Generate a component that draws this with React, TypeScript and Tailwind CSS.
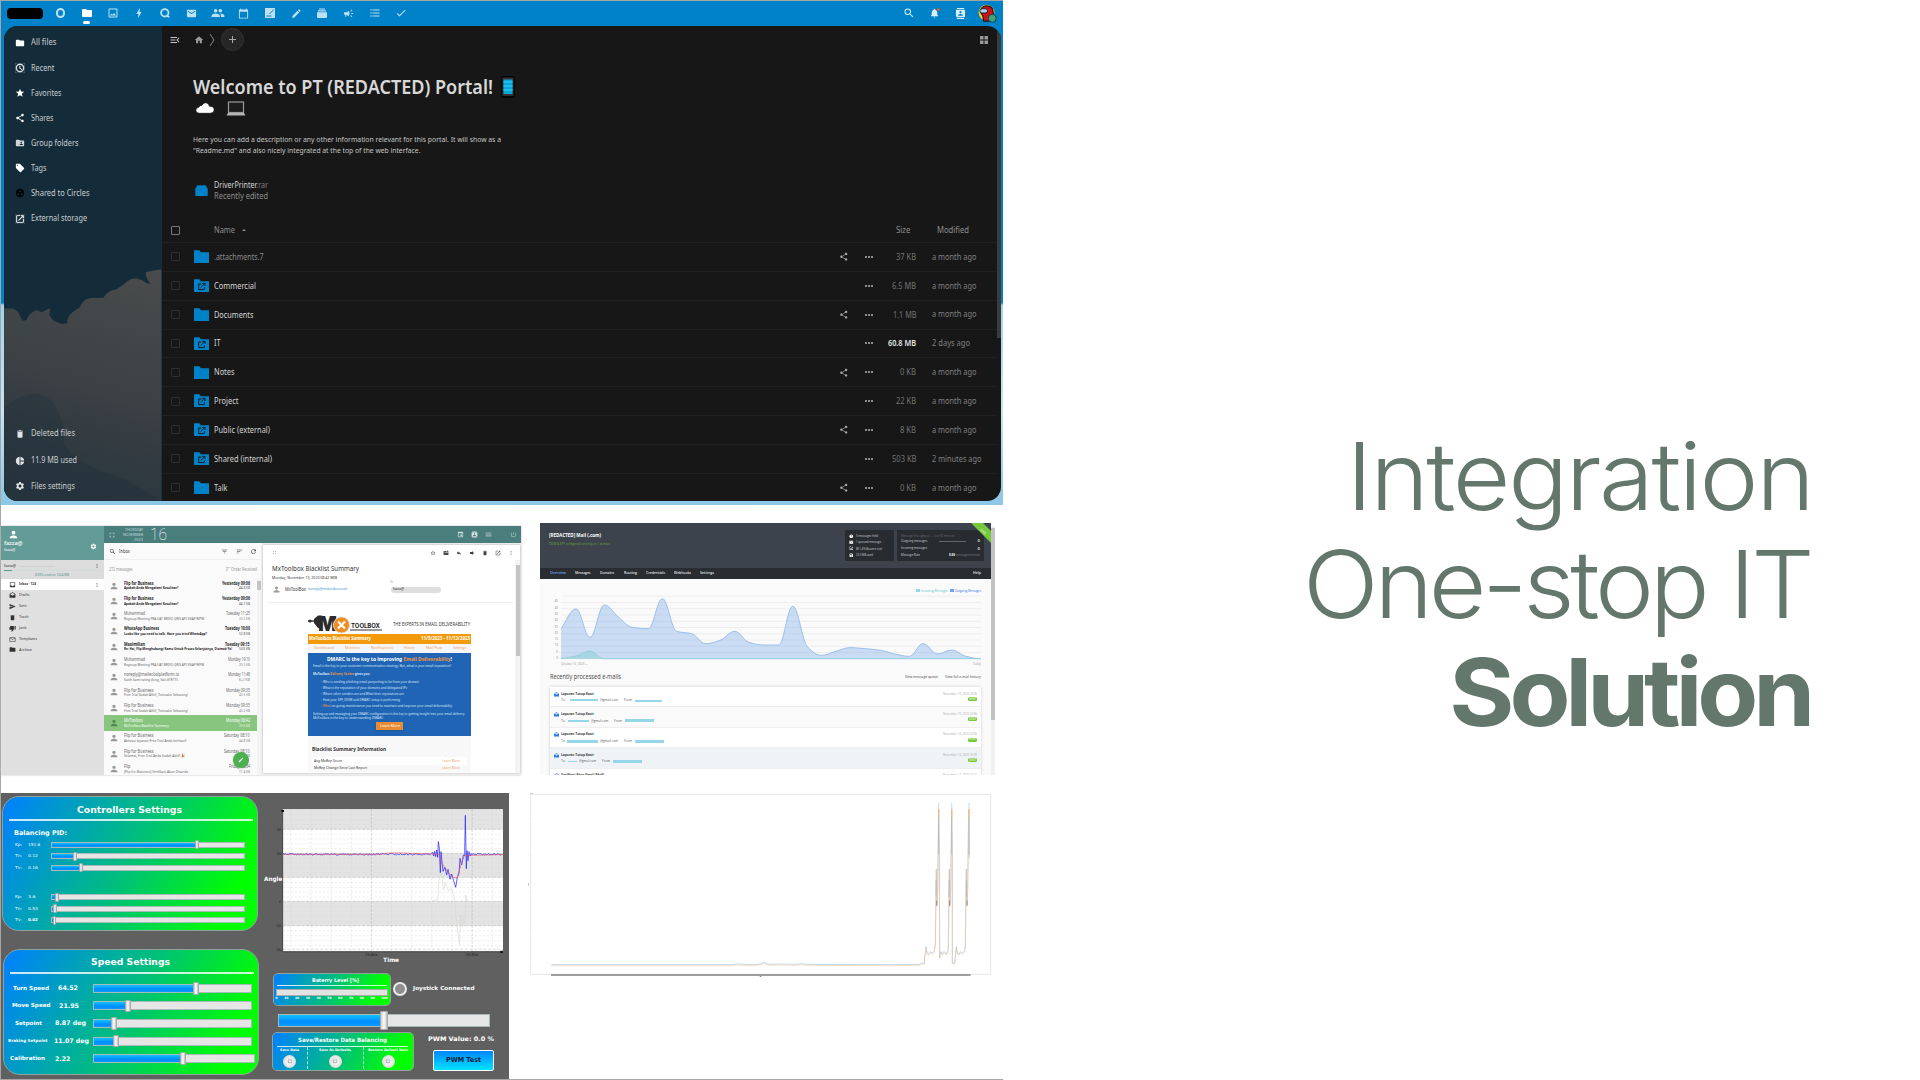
import React, { useLayoutEffect, useRef } from "react";
import {
  MdFolder, MdAccessTime, MdStar, MdShare, MdFolderShared, MdLocalOffer, MdGroupWork, MdOpenInNew,
  MdDelete, MdPieChart, MdSettings, MdOutlineImage, MdBolt, MdEmail, MdGroup, MdCalendarToday, MdEdit,
  MdCheck, MdFormatListBulleted, MdSearch, MdNotifications, MdContacts, MdHome, MdMenuOpen,
  MdCampaign, MdPerson, MdFilterList, MdSort, MdRefresh, MdMoreVert, MdInbox, MdDrafts, MdSend,
  MdThumbDown, MdMailOutline, MdEvent, MdStarBorder, MdReply, MdForward, MdMarkEmailUnread,
  MdPowerSettingsNew, MdFullscreen, MdMoreHoriz, MdHelp, MdMail, MdSave, MdAddchart,
} from "react-icons/md";

type Kids = { children: React.ReactNode };

/* Text squeezed or stretched horizontally to a fixed width. */
function Fit({ w, className = "", children }: { w: number; className?: string } & Kids) {
  const ref = useRef<HTMLSpanElement>(null);
  useLayoutEffect(() => {
    const n = ref.current;
    if (!n) return;
    n.style.transform = "none";
    n.style.transform = `scaleX(${w / n.getBoundingClientRect().width})`;
  }, [w]);
  return (
    <span className={"inline-block shrink-0 leading-none " + className} style={{ width: w }}>
      <span ref={ref} className="inline-block origin-left whitespace-nowrap">{children}</span>
    </span>
  );
}

/* Text tracked in or out to a fixed width. */
function Tracked({ w, className = "", children }: { w: number; className?: string; children: string }) {
  const ref = useRef<HTMLSpanElement>(null);
  useLayoutEffect(() => {
    const n = ref.current;
    if (!n) return;
    n.style.letterSpacing = "0px";
    const base = n.offsetWidth;
    n.style.letterSpacing = `${(w - base) / (children.length - 1)}px`;
  }, [w, children]);
  return (
    <span className={"block origin-right scale-x-[1.06] whitespace-nowrap " + className} style={{ width: w }}>
      <span ref={ref} className="inline-block">{children}</span>
    </span>
  );
}

/* ---------------------------------------------------------------- files */

const TOP_ICONS = [
  <span className="h-[9.500px] w-[9.500px] rounded-full border-[2px] border-[#bfe0f2]" />,
  <MdFolder className="h-[12px] w-[12px] text-white" />,
  <MdOutlineImage className="h-[12px] w-[12px]" />,
  <MdBolt className="h-[12px] w-[12px]" />,
  <svg viewBox="0 0 10 10" className="h-[10px] w-[10px]" fill="none" stroke="currentColor" strokeWidth="1.8"><circle cx="4.8" cy="4.8" r="3.7" /><path d="M6.5 7.6L9.3 9" /></svg>,
  <MdEmail className="h-[11px] w-[11px]" />,
  <MdGroup className="h-[14px] w-[14px]" />,
  <MdCalendarToday className="h-[11px] w-[11px]" />,
  <svg viewBox="0 0 10 10" className="h-[10px] w-[10px]"><path d="M0 0H10V10H0z" fill="currentColor" /><path d="M4.500 6L8.800 1.500M1.500 8h5" stroke="#0082c9" strokeWidth="1" /></svg>,
  <MdEdit className="h-[11px] w-[11px]" />,
  <svg viewBox="0 0 10 10" className="h-[10px] w-[10px]" fill="currentColor"><path d="M2 .5h6v1H2zM1 2.2h8v1.3H1zM0 4.3h10V9q0 1-1 1H1Q0 10 0 9z" /></svg>,
  <MdCampaign className="h-[11px] w-[11px]" />,
  <MdFormatListBulleted className="h-[12px] w-[12px]" />,
  <MdCheck className="h-[12px] w-[12px]" />,
];

const NAV: [React.ReactNode, string, number][] = [
  [<MdFolder />, "All files", 25.5],
  [<MdAccessTime strokeWidth={0.6} stroke="currentColor" />, "Recent", 23.5],
  [<MdStar />, "Favorites", 30.5],
  [<MdShare />, "Shares", 22.5],
  [<MdFolderShared className="text-[#d0d4d6]" />, "Group folders", 47.5],
  [<MdLocalOffer />, "Tags", 15.5],
  [<MdGroupWork className="text-black" />, "Shared to Circles", 58.5],
  [<MdOpenInNew strokeWidth={0.4} stroke="currentColor" />, "External storage", 56],
];

const NAV_FOOT: [React.ReactNode, string, number, string][] = [
  [<MdDelete />, "Deleted files", 44, "h-[28px]"],
  [<MdPieChart />, "11.9 MB used", 46, "h-[26px]"],
  [<MdSettings />, "Files settings", 44, "h-[25px]"],
];

type FileRow = { name: string; w: number; ext?: boolean; share?: boolean; size: string; sw: number; mod: string; mw: number; dim?: boolean; strong?: boolean };
const FILES: FileRow[] = [
  { name: ".attachments.7", w: 49.5, share: true, size: "37 KB", sw: 20, mod: "a month ago", mw: 44.5, dim: true },
  { name: "Commercial", w: 42, ext: true, size: "6.5 MB", sw: 24, mod: "a month ago", mw: 44.5 },
  { name: "Documents", w: 39.5, share: true, size: "1.1 MB", sw: 23.5, mod: "a month ago", mw: 44.5 },
  { name: "IT", w: 6.5, ext: true, size: "60.8 MB", sw: 28, mod: "2 days ago", mw: 38, strong: true },
  { name: "Notes", w: 20.5, share: true, size: "0 KB", sw: 16, mod: "a month ago", mw: 44.5 },
  { name: "Project", w: 24.5, ext: true, size: "22 KB", sw: 20, mod: "a month ago", mw: 44.5 },
  { name: "Public (external)", w: 56, ext: true, share: true, size: "8 KB", sw: 16, mod: "a month ago", mw: 44.5 },
  { name: "Shared (internal)", w: 58, ext: true, size: "503 KB", sw: 24.5, mod: "2 minutes ago", mw: 49.5 },
  { name: "Talk", w: 13.5, share: true, size: "0 KB", sw: 16, mod: "a month ago", mw: 44.5 },
];

function FolderIcon({ ext }: { ext?: boolean }) {
  return (
    <svg viewBox="0 0 46 40" className="h-[13.3px] w-[15.3px] shrink-0">
      <path d="M0 1h16l5 6h25v32H0z" fill="#0082c9" />
      {ext && <path d="M22 15h-8v17h17v-7M25 13h8v8M32 14L21 25" fill="none" stroke="#121a20" strokeWidth="3" />}
    </svg>
  );
}

function FilesApp() {
  return (
    <section className="flex h-[504px] w-[1002px] flex-col bg-[linear-gradient(#0082c9_0_302px,#9fd3f0_304px,#c4e3f3_410px,#8cc6e6_504px)] font-['Noto_Sans',sans-serif]">
      <header className="flex h-[25px] shrink-0 items-center bg-[#0082c9] text-[#bfe0f2]">
        <div className="mb-px ml-[6px] h-[11px] w-[36px] rounded-[4px] bg-black" />
        <div className="mb-px ml-[4.500px] flex">
          {TOP_ICONS.map((icon, i) => (
            <div key={i} className="relative flex h-[24px] w-[26.2px] items-center justify-center">
              {icon}
              {i === 1 && <span className="absolute bottom-[1px] h-[3px] w-[7px] rounded-full bg-white" />}
            </div>
          ))}
        </div>
        <div className="mr-[6px] mb-px ml-auto flex items-center text-[#d9eef9]">
          <MdSearch className="mr-[14.500px] h-[12px] w-[12px]" />
          <span className="relative mr-[15px]"><MdNotifications className="h-[12px] w-[11px]" /><i className="absolute top-[1px] right-0 h-[3px] w-[3px] rounded-full bg-[#e9522f]" /></span>
          <MdContacts className="mr-[12px] h-[11px] w-[11px]" />
          <svg viewBox="0 0 20 20" className="h-[19px] w-[19px]">
            <circle cx="9" cy="9" r="8.3" fill="#f3d21c" />
            <path d="M3 8Q3 2 9 2q7 0 7 7v4l-4 5H6l-1-6Q3 11 3 8z" fill="#d01018" stroke="#221015" strokeWidth="1.2" />
            <rect x="2" y="5" width="8" height="4.5" rx="2.2" fill="#a9d3e8" stroke="#16202a" />
            <circle cx="15" cy="15" r="4.2" fill="#41a674" stroke="#17394d" />
          </svg>
        </div>
      </header>

      <div className="ml-[3px] flex h-[475px] w-[997px] overflow-hidden rounded-[14px] bg-[#171717]">
        <aside className="relative flex w-[157.5px] shrink-0 flex-col bg-[#142b39] text-[8.3px] text-[#c9ced1]">
          <svg viewBox="12 18 472 735" className="absolute bottom-0 left-0 h-[245px] w-[157.5px]">
            <defs>
              <linearGradient id="cl" x1="0.6" y1="0" x2="0.4" y2="1">
                <stop offset="0" stopColor="#484a4b" /><stop offset="0.45" stopColor="#3d4245" /><stop offset="1" stopColor="#27343d" />
              </linearGradient>
            </defs>
            <path d="M12 175L40 176Q55 182 58 195L68 212 80 210Q85 190 110 180L125 187 150 174 148 195 160 212 185 222 202 220Q198 205 215 188L240 172Q246 150 270 144L310 143Q322 122 350 118L375 100Q390 84 412 86L425 90 440 100 452 101Q436 85 437 66L484 58V753H12Z" fill="url(#cl)" />
            <path d="M12 470Q110 400 160 460 200 520 190 580 230 650 380 690L480 753H12Z" fill="#24323c" opacity=".5" />
          </svg>
          <nav className="relative pt-[4px]">
            {NAV.map(([icon, label, w]) => (
              <a key={label} className="flex h-[25.15px] items-center">
                <span className="ml-[11px] flex w-[16px] text-[10px] text-white">{icon}</span>
                <Fit w={w}>{label}</Fit>
              </a>
            ))}
          </nav>
          <nav className="relative mt-auto pb-[2.5px]">
            {NAV_FOOT.map(([icon, label, w, h]) => (
              <a key={label} className={"flex items-center " + h}>
                <span className="ml-[11px] flex w-[16px] text-[10px] text-[#e1e4e6]">{icon}</span>
                <Fit w={w}>{label}</Fit>
              </a>
            ))}
          </nav>
        </aside>

        <main className="flex w-[835px] shrink-0 flex-col text-[#d4d4d4]">
          <div className="flex h-[27px] shrink-0 items-center text-[#9b9b9b]">
            <MdMenuOpen className="ml-[7.500px] h-[12px] w-[12px] text-[#c4c4c4]" />
            <MdHome className="ml-[13px] h-[10px] w-[10px]" />
            <svg viewBox="0 0 6 14" className="ml-[5px] h-[14px] w-[6px]" fill="none" stroke="#8a8a8a"><path d="M1 1l4 6-4 6" /></svg>
            <span className="ml-[6px] flex h-[23px] w-[23px] items-center justify-center rounded-full border border-[#333] bg-[#262626]">
              <svg viewBox="0 0 7 7" className="h-[7px] w-[7px]" stroke="#a8a8a8"><path d="M3.5 0v7M0 3.5h7" /></svg>
            </span>
            <svg viewBox="0 0 8 8" className="mr-[9px] ml-auto h-[8px] w-[8px]" fill="#9a9a9a"><path d="M0 0h3.500v3.500H0zM4.500 0H8v3.500H4.500zM0 4.500h3.500V8H0zM4.500 4.500H8V8H4.500z" /></svg>
          </div>
          <div className="mt-[22px] flex h-[24px] shrink-0 items-center pl-[31.5px]">
            <Fit w={300} className="text-[19.5px] font-semibold text-[#d8d8d8]">Welcome to PT (REDACTED) Portal!</Fit>
            <svg viewBox="0 0 14 22" className="ml-[8px] h-[22px] w-[14px]">
              <rect width="14" height="22" rx="2" fill="#050505" /><rect x="1.5" y="1.5" width="11" height="18.5" fill="#333" />
              <rect x="2.5" y="3.5" width="9" height="14.5" fill="#0aa5d6" /><path d="M2.5 6h9M2.5 10h9M2.5 14h9" stroke="#20c8f5" strokeWidth="1.4" />
            </svg>
          </div>
          <div className="flex h-[18px] shrink-0 items-center pl-[33.500px]">
            <svg viewBox="0 0 20 12" className="h-[12px] w-[20px]"><path d="M4.5 11.3Q.8 11.3.8 8.3q0-2.6 3-3Q4.600 3 7 3.300 8 .7 10.600.7 14 .8 14.500 4.300q4.500-.3 4.700 3.500 0 3.500-4 3.500z" fill="#fff" stroke="#050505" strokeWidth=".7" /></svg>
            <svg viewBox="0 0 20 15" className="ml-[10.500px] h-[15px] w-[20px]"><rect x="2.500" y="1" width="15" height="10.500" fill="#1c1c1c" stroke="#9c9c9c" strokeWidth="1.200" /><path d="M2 12h16l1.500 2.500H.5z" fill="#b4b4b4" /></svg>
          </div>
          <div className="mt-[17.5px] flex h-[22px] shrink-0 flex-col justify-around pl-[31.500px] text-[6.700px] text-[#c6c6c6]">
            <Fit w={308}>Here you can add a description or any other information relevant for this portal. It will show as a</Fit>
            <Fit w={227.500}>"Readme.md" and also nicely integrated at the top of the web interface.</Fit>
          </div>
          <div className="mt-[22.500px] mb-[.5px] flex h-[23px] shrink-0 items-center pl-[33px] text-[8.200px]">
            <svg viewBox="0 0 13 12" className="h-[11.500px] w-[13px]"><path d="M1.500 1q0-1 1-1h8q1 0 1 1v1.500h-10z" fill="#005e93" /><path d="M0 4l2-3h9l2 3v6.500q0 1-1 1H1q-1 0-1-1z" fill="#0082c9" /></svg>
            <div className="ml-[6.500px] flex flex-col gap-[2.500px]">
              <Fit w={54}>DriverPrinter<span className="text-[#7d7d7d]">.rar</span></Fit>
              <Fit w={54} className="text-[#8c8c8c]">Recently edited</Fit>
            </div>
          </div>
          <div className="mt-[15.500px] flex h-[24px] shrink-0 items-center text-[8.200px] text-[#8e8e8e]">
            <span className="ml-[9.500px] h-[9px] w-[9px] rounded-[1px] border border-[#777]" />
            <Fit w={21} className="ml-[34px]">Name</Fit>
            <span className="ml-[7px] h-0 w-0 border-x-[2px] border-b-[2px] border-x-transparent border-b-[#8e8e8e]" />
            <Fit w={14.500} className="ml-auto">Size</Fit>
            <Fit w={32} className="mr-[28px] ml-[26px]">Modified</Fit>
          </div>
          {FILES.map((f) => (
            <div key={f.name} className="flex h-[28.850px] shrink-0 items-center border-t border-[#212121] text-[8.200px]">
              <span className="ml-[9.500px] h-[9px] w-[9px] shrink-0 rounded-[1px] border border-[#2e2e2e]" />
              <span className="ml-[13.500px] flex"><FolderIcon ext={f.ext} /></span>
              <Fit w={f.w} className={f.dim ? "ml-[5px] text-[#8b8b8b]" : "ml-[5px]"}>{f.name}</Fit>
              <span className="ml-auto flex w-[77px] shrink-0 items-center text-[9.500px] text-[#a9a9a9]">
                <span className="w-[23.500px]">{f.share && <MdShare />}</span>
                <MdMoreHoriz className="h-[12px] w-[12px]" />
              </span>
              <span className="-ml-[31px] flex w-[31px] justify-end">
                <Fit w={f.sw} className={f.strong ? "font-semibold text-[#e4e4e4]" : "text-[#747474]"}>{f.size}</Fit>
              </span>
              <span className="ml-[15.500px] w-[65px]"><Fit w={f.mw} className="text-[#808080]">{f.mod}</Fit></span>
            </div>
          ))}
        </main>
        <div className="w-[4.500px]"><div className="h-[312px] bg-[#3b3b3b]" /></div>
      </div>
    </section>
  );
}

/* ---------------------------------------------------------------- webmail */

const FOLDERS: [React.ReactNode, string, number][] = [
  [<MdDrafts />, "Drafts", 10.500],
  [<MdSend />, "Sent", 7.500],
  [<MdDelete />, "Trash", 9.500],
  [<MdThumbDown />, "Junk", 7.500],
  [<MdMailOutline />, "Templates", 18],
  [<MdFolder />, "Archive", 13],
];

type Mail = [string, number, string, number, string, number, string, boolean?];
const MAILS: Mail[] = [
  ["Flip for Business", 29.500, "Apakah Anda Mengalami Kesulitan?", 54.500, "Yesterday 09:06", 28, "44.8 KB", true],
  ["Flip for Business", 29.500, "Apakah Anda Mengalami Kesulitan?", 54.500, "Yesterday 09:06", 28, "44.7 KB", true],
  ["Muhammad", 21, "Regroup Meeting PRA UAT BRIVO QRIS API SNAP WPM", 80, "Tuesday 11:25", 24, "20.5 KB"],
  ["WhatsApp Business", 35, "Looks like you need to talk. Have you tried WhatsApp?", 83, "Tuesday 10:00", 25, "52.8 KB", true],
  ["Maximilian", 21, "Re: Hai, Flip Menghubungi Kamu Untuk Proses Selanjutnya, Disimak Ya!", 108, "Tuesday 09:15", 24.500, "500 KB", true],
  ["Muhammad", 21, "Regroup Meeting PRA UAT BRIVO QRIS API SNAP WPM", 80, "Monday 19:10", 22, "20.5 KB"],
  ["noreply@mailer.bolplatform.io", 55, "Kasih kami rating dong, Kak #1R7T5", 54, "Monday 11:48", 22, "6.2 KB"],
  ["Flip for Business", 29.500, "Free Trial Sudah AKtif, Transaksi Sekarang!", 64, "Monday 09:35", 24, "43.5 KB"],
  ["Flip for Business", 29.500, "Free Trial Sudah AKtif, Transaksi Sekarang!", 64, "Monday 09:35", 24, "43.2 KB"],
  ["MxToolbox", 19, "MxToolbox Blacklist Summary", 45, "Monday 08:42", 24, "39.6 KB"],
  ["Flip for Business", 29.500, "Aktivasi layanan Free Trial Anda berhasil!", 62.500, "Saturday 08:10", 25.500, "44.8 KB"],
  ["Flip for Business", 29.500, "Selamat, Free Trial Anda Sudah Aktif! 🎉", 61, "Saturday 08:10", 25.500, "44.8 KB"],
  ["Flip", 6.500, "[Flip for Business] Verifikasi Akun Ditunda", 64, "Friday 08:34", 21, "11.4 KB"],
];

const BULLETS: [string, number][] = [
  ["Who is sending phishing email purporting to be from your domain", 98],
  ["What is the reputation of your domains and delegated IPs", 86],
  ["Where other senders are and What their reputations are", 83],
  ["How your SPF, DKIM and DMARC setup is performing", 79],
  ["What on-going maintenance you need to maintain and improve your email deliverability", 131],
];

function WebMail() {
  return (
    <section className="mt-[3px] mr-px flex h-[249px] w-[520px] shrink-0 overflow-hidden font-['Noto_Sans',sans-serif] text-[4.200px] text-[#333] shadow-[0_0_2px_#bbb]">
      <aside className="flex w-[103px] shrink-0 flex-col bg-[#e0e0e0]">
        <div className="flex h-[34px] flex-col bg-[#639b96] pl-[3px] text-white">
          <MdPerson className="mt-[3px] ml-[4px] h-[11px] w-[11px]" />
          <div className="mt-[1px] flex items-center">
            <div className="flex flex-col gap-[1px]">
              <Fit w={18.500} className="text-[5.500px] font-medium">fazza@</Fit>
              <Fit w={11.500} className="text-[3.500px]">fazza@</Fit>
            </div>
            <MdSettings className="mr-[7px] ml-auto h-[7px] w-[7px]" />
          </div>
        </div>
        <div className="flex h-[19px] flex-col bg-[#dcdcdc]">
          <div className="flex h-[10px] items-center pt-[2px] pl-[3px]"><Fit w={12}>fazza@</Fit><i className="ml-[3px] h-px w-[36px] bg-[#cfcfcf]" /><MdMoreVert className="mr-[4px] ml-auto h-[6px] w-[6px]" /></div>
          <div className="ml-[3px] h-[1px] w-[97px] bg-[#cfdcda]"><div className="h-[1px] w-[8px] bg-[#5a9a95]" /></div>
          <Fit w={34} className="mt-[1.500px] ml-[34px] text-[3.500px] text-[#4e918c]">8.09% used on 1024 MB</Fit>
        </div>
        <div className="flex h-[11px] shrink-0 items-center bg-white pl-[7.500px]">
          <MdInbox className="h-[7px] w-[7px]" /><Fit w={17} className="ml-[3px] font-bold">Inbox · 124</Fit><MdMoreVert className="mr-[4px] ml-auto h-[6px] w-[6px]" />
        </div>
        {FOLDERS.map(([icon, name, w]) => (
          <div key={name} className="flex h-[10.900px] shrink-0 items-center pl-[7.500px]"><span className="text-[7px]">{icon}</span><Fit w={w} className="ml-[3px]">{name}</Fit></div>
        ))}
      </aside>
      <div className="flex w-[417px] shrink-0 flex-col">
        <header className="flex h-[17px] shrink-0 items-center bg-[#4a7e7d] text-[#d5e4e3]">
          <MdFullscreen className="ml-[4px] h-[8px] w-[8px]" />
          <div className="ml-[7px] flex w-[20px] flex-col items-end gap-[1.500px] text-[3.500px] text-[#c0d6d5]"><Fit w={18}>THURSDAY</Fit><Fit w={20}>NOVEMBER</Fit><Fit w={9}>2023</Fit></div>
          <Fit w={17} className="ml-[7px] font-['Roboto'] text-[16px] font-thin text-white">16</Fit>
          <div className="mr-[4px] ml-auto flex items-center gap-[7px]"><MdEvent className="h-[7px] w-[7px]" /><MdContacts className="h-[7px] w-[7px]" /><MdMail className="h-[7px] w-[7px] opacity-40" /><MdPowerSettingsNew className="ml-[11px] h-[7px] w-[7px] opacity-70" /></div>
        </header>
        <div className="flex h-[232px] bg-[#f1f1f1]">
          <div className="flex w-[157px] shrink-0 flex-col bg-[#fafafa]">
            <div className="flex h-[17px] shrink-0 items-center border-b border-[#eee]">
              <MdSearch className="ml-[4.500px] h-[7px] w-[7px]" /><Fit w={11} className="ml-[3px] text-[5px]">Inbox</Fit>
              <span className="mr-[4px] ml-auto flex gap-[7.500px] text-[7px]"><MdFilterList /><MdSort /><MdRefresh /></span>
            </div>
            <div className="flex h-[18px] shrink-0 items-center text-[#999]"><Fit w={23.500} className="ml-[5px] text-[4.500px]">272 messages</Fit><MdSort className="ml-auto h-[6px] w-[6px]" /><Fit w={26} className="mr-[4.500px] text-[4.500px]">Order Received</Fit></div>
            <div className="flex h-[197px]">
              <div className="flex w-[152.500px] flex-col overflow-hidden">
                {MAILS.map(([from, fw, sub, sw, date, dw, size, bold], i) => (
                  <div key={i} className={"flex h-[15.270px] shrink-0 items-center " + (i === 9 ? "bg-[#88c67f] text-white" : bold ? "font-bold text-[#222]" : "text-[#666]")}>
                    <MdPerson className={"ml-[4.500px] h-[10px] w-[10px] shrink-0 " + (i === 9 ? "text-[#4f8a48]" : "text-[#999]")} />
                    <div className="ml-[5px] flex flex-col gap-[1.200px]">
                      <div className="flex w-[126px] justify-between"><Fit w={fw} className="text-[4.500px]">{from}</Fit><Fit w={dw} className="text-[4.500px]">{date}</Fit></div>
                      <div className="flex w-[126px] justify-between"><Fit w={sw}>{sub}</Fit><Fit w={11} className="text-[3.500px] font-normal opacity-80">{size}</Fit></div>
                    </div>
                  </div>
                ))}
              </div>
              <div className="flex w-[4.500px] flex-col items-center bg-[#f3f3f3] pt-[3px]"><i className="h-[9px] w-[4px] bg-[#c4c4c4]" /></div>
            </div>
          </div>
          <div className="relative -ml-[157px] flex w-[157px] items-end justify-end pr-[12.500px] pb-[7px]">
            <span className="flex h-[16px] w-[16px] items-center justify-center rounded-full bg-[#4caf50] text-white shadow"><MdEdit className="h-[6px] w-[6px]" /></span>
          </div>
          <article className="mt-[2px] ml-[2px] flex h-[228px] w-[257px] bg-white shadow-[0_0_2px_#aaa]">
            <div className="flex w-[252px] flex-col">
              <div className="flex h-[15px] shrink-0 items-center pl-[9px] text-[#444]"><MdFullscreen className="h-[5px] w-[5px] text-[#7aa]" />
                <span className="mr-[1px] ml-auto flex items-center gap-[7px] text-[6px]"><MdStarBorder /><MdMarkEmailUnread /><MdReply /><MdForward /><MdDelete /><MdOpenInNew /><MdMoreVert /></span></div>
              <div className="flex h-[15px] shrink-0 items-center pt-[1.500px] pl-[9px]"><Fit w={87} className="text-[7.200px]">MxToolbox Blacklist Summary</Fit></div>
              <div className="flex h-[27px] shrink-0 pl-[9px]">
                <div className="flex w-[118px] flex-col"><Fit w={65} className="mt-[1px]">Monday, November 13, 2023 08:42 WIB</Fit>
                  <div className="mt-[4.500px] flex items-center"><MdPerson className="h-[9px] w-[9px] text-[#999]" /><Fit w={21} className="ml-[4px] text-[4.600px]">MxToolBox</Fit><Fit w={39} className="ml-[1.500px] text-[#2a8ed0] underline">noreply@mxtoolbox.com</Fit></div></div>
                <div className="flex flex-col pt-[5px]"><Fit w={3} className="text-[3.500px] text-[#888]">To</Fit><div className="mt-[3px] ml-[1px] flex h-[6px] w-[50px] items-center rounded-full bg-[#dedede] pl-[2px]"><Fit w={11}>fazza@</Fit></div></div>
              </div>
              <div className="ml-[5px] h-px w-[245px] shrink-0 bg-[#eee]" />
              <div className="ml-[45px] flex w-[163px] flex-col">
                <div className="flex h-[31px] shrink-0 items-center pt-[11px]">
                  <svg viewBox="0 0 76 20" className="h-[20px] w-[76px]">
                    <path d="M0 7h8" stroke="#333" strokeWidth="1.500" /><circle cx="2" cy="7" r="1.500" fill="#333" />
                    <path d="M6 5l4-3.500h4V14H10L6 9z" fill="#2b2b2b" />
                    <text x="10" y="16.500" fontFamily="Inter" fontWeight="900" fontSize="20" fill="#2b2b2b" textLength="19" lengthAdjust="spacingAndGlyphs">M</text>
                    <circle cx="33.500" cy="11" r="8" fill="#f08c1c" stroke="#ddd" />
                    <path d="M30 7.500l7 7M37 7.500l-7 7" stroke="#fff" strokeWidth="2.200" />
                    <text x="43" y="13.500" fontFamily="Inter" fontWeight="700" fontSize="6" fill="#222" textLength="29" lengthAdjust="spacingAndGlyphs">TOOLBOX</text>
                    <path d="M42 16h32" stroke="#333" />
                  </svg>
                  <Fit w={77} className="ml-[9px] text-[4.600px]">THE EXPERTS IN EMAIL DELIVERABILITY</Fit>
                </div>
                <div className="flex h-[9.500px] shrink-0 items-center justify-between bg-[#f29a0c] px-[1px] text-[4.800px] font-bold text-white"><Fit w={62}>MxToolbox Blacklist Summary</Fit><Fit w={49}>11/5/2023 - 11/12/2023</Fit></div>
                <div className="flex h-[9px] shrink-0 items-center justify-around bg-[#f6f6f6] text-[#eb9d63]"><Fit w={20}>Dashboard</Fit><Fit w={15}>Monitors</Fit><Fit w={22}>Notifications</Fit><Fit w={11}>History</Fit><Fit w={16}>Mail Flow</Fit><Fit w={13}>Settings</Fit></div>
                <div className="flex h-[83.500px] shrink-0 flex-col bg-[#2065b5] pl-[5px] text-[3.800px] text-[#d9e6f5]">
                  <Fit w={125} className="mt-[4.500px] ml-[14px] text-[5.500px] font-bold text-white">DMARC is the key to improving <span className="text-[#f4953b]">Email Deliverability</span>!</Fit>
                  <Fit w={138} className="mt-[1.200px]">Email is the key to your customer communication strategy. But, what is your email reputation?</Fit>
                  <Fit w={57} className="mt-[4.500px] font-bold">MxToolbox <span className="text-[#f4953b]">Delivery Center</span> gives you:</Fit>
                  <div className="mt-[4.500px] mb-[4px] ml-[8px] flex flex-col gap-[2.200px]">
                    {BULLETS.map(([t, w]) => <Fit key={t} w={w}>◦ {t.startsWith("What on") ? <><span className="text-[#f4953b]">What</span>{t.slice(4)}</> : t}</Fit>)}
                  </div>
                  <Fit w={152}>Setting up and managing your DMARC configuration is the key to getting insight into your email delivery.</Fit>
                  <Fit w={71}>MxToolbox is the key to understanding DMARC.</Fit>
                  <div className="mt-[2px] ml-[63px] flex h-[8.500px] w-[27px] items-center justify-center bg-[#e98b33] text-white shadow"><Fit w={20} className="text-[4.200px]">Learn More</Fit></div>
                </div>
                <div className="flex h-[35.500px] shrink-0 flex-col bg-[#f8f8f8] px-[4px]">
                  <Fit w={74} className="mt-[11px] text-[5.500px] font-bold">Blacklist Summary Information</Fit>
                  <div className="mt-[4.500px] flex h-[7.500px] items-center justify-between bg-white px-[2px]"><Fit w={28}>Avg MxRep Score</Fit><Fit w={18} className="mr-[5px] text-[#eb9d63]">Learn More</Fit></div>
                  <div className="flex h-[7px] items-center justify-between px-[2px]"><Fit w={53}>MxRep Change Since Last Report</Fit><Fit w={18} className="mr-[5px] text-[#eb9d63]">Learn More</Fit></div>
                </div>
              </div>
            </div>
            <div className="mt-[15px] flex w-[5px] flex-col items-center bg-[#f4f4f4] pt-[5px]"><i className="h-[91px] w-[4px] bg-[#c4c4c4]" /></div>
          </article>
        </div>
      </div>
    </section>
  );
}

/* ---------------------------------------------------------------- mail server */

type Pt = [number, number];
const OUTGOING: Pt[] = [[78, 341], [123, 282], [165, 367], [208, 270], [252, 308], [292, 337], [340, 341], [382, 251], [425, 349], [470, 356], [512, 386], [555, 376], [599, 349], [642, 382], [686, 390], [731, 390], [773, 274], [818, 396], [860, 421], [905, 408], [945, 398], [990, 401], [1036, 406], [1080, 417], [1123, 424], [1164, 386], [1208, 417], [1250, 405], [1293, 424], [1338, 431]];
const INCOMING: Pt[] = [[78, 431], [123, 423], [165, 408], [206, 431]];

/* Smooth curve that never overshoots its points. */
function smooth(p: Pt[]) {
  const slope = p.map((_, i) => {
    if (i === 0 || i === p.length - 1) return 0;
    const a = (p[i][1] - p[i - 1][1]) / (p[i][0] - p[i - 1][0]);
    const b = (p[i + 1][1] - p[i][1]) / (p[i + 1][0] - p[i][0]);
    return a * b <= 0 ? 0 : (2 * a * b) / (a + b);
  });
  slope[0] = (p[1][1] - p[0][1]) / (p[1][0] - p[0][0]);
  return p.map(([x, y], i) => {
    if (i === 0) return `M${x} ${y}`;
    const [px, py] = p[i - 1];
    const d = (x - px) / 2.6;
    return `C${px + d} ${py + slope[i - 1] * d} ${x - d} ${y - slope[i] * d} ${x} ${y}`;
  }).join("");
}

const TABS: [string, number, string][] = [
  ["Overview", 16, "ml-[10px] text-[#6ea8f5]"], ["Messages", 15.500, "ml-[9px]"], ["Domains", 14, "ml-[9.500px]"], ["Routing", 13, "ml-[9.500px]"],
  ["Credentials", 19, "ml-[9px]"], ["Webhooks", 17, "ml-[9px]"], ["Settings", 14, "ml-[9px]"], ["Help", 8, "ml-auto mr-[10px]"],
];

type Sent = { subject: string; date: string; pad: string; a: string; at: number; b: string; bg: string };
const SENT: Sent[] = [
  { subject: "Laporan Tutup Kasir", date: "November 15, 2023 23:06", pad: "ml-[5px]", a: "h-[2px] w-[28px]", at: 18, b: "mt-[1px] h-[2px] w-[27px]", bg: "bg-white" },
  { subject: "Laporan Tutup Kasir", date: "November 15, 2023 22:06", pad: "ml-[3px]", a: "h-[2px] w-[21px]", at: 17, b: "h-[2.500px] w-[29px]", bg: "bg-[#fafafa]" },
  { subject: "Laporan Tutup Kasir", date: "November 14, 2023 22:56", pad: "ml-[2px]", a: "h-[3px] w-[31px]", at: 18, b: "h-[3px] w-[29px]", bg: "bg-white" },
  { subject: "Laporan Tutup Kasir", date: "November 14, 2023 16:00", pad: "ml-[3px]", a: "h-[1.500px] w-[9px]", at: 17, b: "h-[2.500px] w-[29px]", bg: "bg-[#eff3f6]" },
  { subject: "Verifikasi Akun Email (Aktif)", date: "November 14, 2023 13:21", pad: "ml-[3px]", a: "h-[2px] w-[20px]", at: 17, b: "h-[2px] w-[29px]", bg: "bg-white" },
];

function MailServer() {
  return (
    <section className="ml-[18px] flex h-[252px] w-[455px] shrink-0 overflow-hidden font-['Open_Sans',sans-serif] text-[4.200px]">
      <div className="flex w-[451px] shrink-0 flex-col bg-[#fafafa]">
        <header className="relative flex h-[45px] shrink-0 bg-[#3c434c] text-[#cfd3d8]">
          <div className="flex flex-col gap-[3.500px] pt-[10px] pl-[9px]">
            <Fit w={52} className="text-[5px] font-bold text-white">[REDACTED] Mail (.com)</Fit>
            <Fit w={61} className="text-[3.800px] text-[#6aab2f]">DKIM & SPF configured correctly on 1 domain</Fit>
          </div>
          <div className="mt-[7px] ml-auto flex h-[31px] w-[49px] flex-col justify-around rounded-[1px] bg-[#282b30] px-[4px] py-[3px]">
            {([[<MdHelp />, "0 messages held", 22], [<MdEmail />, "1 queued message", 25], [<MdAddchart />, "801.4% Bounce rate", 26], [<MdSave />, "22.0 MB used", 17]] as [React.ReactNode, string, number][]).map(([icon, t, w]) => (
              <div key={t} className="flex items-center"><span className="mr-[2px] text-[4.500px] text-white">{icon}</span><Fit w={w}>{t}</Fit></div>
            ))}
          </div>
          <div className="mt-[7px] mr-[7px] ml-[3px] flex h-[31px] w-[87px] flex-col justify-around rounded-[1px] bg-[#282b30] px-[4px] py-[3px]">
            <Fit w={54} className="text-[3.500px] text-[#666c74]">Message throughput — last 60 minutes</Fit>
            <div className="flex items-center justify-between"><Fit w={26}>Outgoing messages</Fit><i className="h-[.7px] w-[27px] bg-[#666]" /><b>0</b></div>
            <div className="flex justify-between"><Fit w={26}>Incoming messages</Fit><b>0</b></div>
            <div className="flex justify-between"><Fit w={19}>Message Rate</Fit><Fit w={31}><b className="text-white">0.00</b> <span className="text-[#777e88]">messages/minute</span></Fit></div>
          </div>
          <svg viewBox="0 0 20 21" className="absolute top-0 right-0 h-[21px] w-[20px]"><path d="M0 0h12l8 8v12z" fill="#76c83c" /><text x="9" y="7" fontSize="3.500" fill="#fff" transform="rotate(45 9 7)" fontFamily="Open Sans">LIVE</text></svg>
        </header>
        <nav className="flex h-[11px] shrink-0 items-center bg-[#292c31] font-semibold text-[#e1e3e6]">
          {TABS.map(([t, w, c]) => <Fit key={t} w={w} className={c}>{t}</Fit>)}
        </nav>
        <div className="mt-[8px] mr-[10px] flex h-[7px] shrink-0 items-center justify-end text-[4px] font-semibold">
          <i className="mr-[1.500px] h-[3.500px] w-[3.500px] bg-[#8fdde0]" /><Fit w={27} className="text-[#7fd6da]">Incoming Messages</Fit>
          <i className="mr-[1.500px] ml-[2px] h-[3.500px] w-[3.500px] bg-[#6fa1ec]" /><Fit w={26} className="text-[#6396e6]">Outgoing Messages</Fit>
        </div>
        <svg viewBox="42 237 1299 201" className="ml-[9px] h-[67px] w-[433px] shrink-0">
          {Array.from({ length: 11 }, (_, i) => <path key={i} d={`M78 ${243.500 + i * 18.800}H1338`} stroke="#e9e9e9" strokeWidth="2" />)}
          {Array.from({ length: 10 }, (_, i) => <text key={i} x="69" y={432 - i * 18.900} fontSize="9" fill="#888" textAnchor="end" fontFamily="Open Sans">{i * 5}</text>)}
          <path d={smooth(OUTGOING) + "L1338 431H78Z"} fill="#6ea3e6" fillOpacity=".35" />
          <path d={smooth(OUTGOING)} fill="none" stroke="#9bbfee" strokeWidth="3" />
          <path d={smooth(INCOMING) + "Z"} fill="#8ccfd3" fillOpacity=".55" />
          <path d={smooth(INCOMING) + "H1338"} fill="none" stroke="#8fd3df" strokeWidth="3" />
        </svg>
        <div className="mx-[10px] flex h-[6px] shrink-0 items-center justify-between pl-[11px] text-[4px] text-[#999]"><Fit w={27}>October 16, 2023 —</Fit><Fit w={8}>Today</Fit></div>
        <div className="mx-[10px] flex h-[20px] shrink-0 items-center pt-[1px] text-[#444]"><Fit w={71} className="text-[6.500px]">Recently processed e-mails</Fit><Fit w={33} className="ml-auto underline">View message queue</Fit><Fit w={36} className="ml-[7px] underline">View full e-mail history</Fit></div>
        <div className="mx-[10px] shadow-[0_0_3px_#ccc]">
          {SENT.map((s, i) => (
            <div key={i} className={"flex h-[20.400px] border-b border-[#eee] pt-[4.500px] " + s.bg}>
              <svg viewBox="0 0 5 5" className="ml-[4px] h-[5px] w-[5px]"><path d="M0 2l2.500-2L5 2v2.500H0z" fill="#2b7de0" /><path d="M1.300.8h2.400V2l-1.200.8L1.300 2z" fill="#cfe2fa" /></svg>
              <div className="ml-[2px] flex flex-col gap-[2.500px]">
                <Fit w={i === 4 ? 43 : 33} className="font-bold text-[#3a3a3a]">{s.subject}</Fit>
                <div className="flex items-center text-[#555]"><Fit w={4}>To</Fit><i className={s.pad + " bg-[#93d7e8] " + s.a} /><Fit w={s.at} className="ml-[1.500px]">@gmail.com</Fit><Fit w={8} className="ml-[6px]">From</Fit><i className={"ml-[3px] bg-[#93d7e8] " + s.b} /></div>
              </div>
              <div className="mr-[4px] ml-auto flex flex-col items-end gap-[1.500px] text-[#aaa]"><Fit w={34} className="text-[3.900px]">{s.date}</Fit><span className="flex h-[4px] w-[9px] items-center justify-center rounded-[1.500px] bg-[#76c83c] text-[3px] text-white">SENT</span></div>
            </div>
          ))}
        </div>
      </div>
      <div className="mt-[3px] flex w-[4px] flex-col bg-[#f1f1f1] pt-[2px]"><i className="h-[192px] w-[4px] bg-[#c3c3c3]" /></div>
    </section>
  );
}

/* ---------------------------------------------------------------- robot panel */

function Slider({ w, h, at }: { w: number; h: "s" | "m" | "l"; at: number }) {
  const track = h === "s" ? "h-[6px]" : h === "m" ? "h-[9px]" : "h-[12.500px]";
  const knob = h === "s" ? "h-[9px] w-[3.500px]" : h === "m" ? "h-[12.500px] w-[5.500px]" : "h-[18.500px] w-[7.500px]";
  return (
    <div className={"flex shrink-0 items-center border border-[#a9b9b9] bg-[#e6e6e6] " + track} style={{ width: w }}>
      <div className="h-full shrink-0 bg-[linear-gradient(#12c2ff,#008cff_60%,#0a9cff)]" style={{ width: at }} />
      <span className={"-ml-[2px] shrink-0 rounded-[1px] border border-[#aaa] bg-[linear-gradient(90deg,#ccc,#fff,#bbb)] " + knob} />
    </div>
  );
}

const CARD = "flex flex-col border border-[#8fa39c] bg-[linear-gradient(115deg,#0080ff_0%,#00c078_50%,#00ff00_88%)] text-white";

const PID: [string, string, number, string][] = [
  ["Kp:", "151.6", 145, "h-[11.500px]"], ["Tn:", "0.12", 23, "h-[11.500px]"], ["Tv:", "0.16", 29, "h-[11px]"],
  ["Kp:", "3.6", 5, "mt-[18.500px] h-[11.500px]"], ["Tn:", "0.53", 3, "h-[11.500px]"], ["Tv:", "0.02", 2.500, "h-[11px]"],
];
const SPEED: [string, number, string, number, number, string, string][] = [
  ["Turn Speed", 36, "64.52", 20, 101, "ml-[9px]", "ml-[9px]"],
  ["Move Speed", 38.500, "21.95", 20, 33, "ml-[8px]", "ml-[8px]"],
  ["Setpoint", 27, "8.87 deg", 31, 19, "ml-[11px]", "ml-[13px]"],
  ["Braking Setpoint", 39.500, "11.07 deg", 35, 21, "ml-[4px]", "ml-[6px]"],
  ["Calibration", 35, "2.22", 15.500, 88, "ml-[6px]", "ml-[10px]"],
];

const noise = (from: number, to: number) => {
  let s = "";
  for (let x = from, k = 7; x < to; x += 3) { k = (k * 73 + 11) % 101; s += `L${x} ${190.500 + (k / 101) * 5}`; }
  return s;
};

function RobotPanel() {
  return (
    <section className="mr-px flex h-[286px] w-[508px] shrink-0 bg-[#606060] font-['DejaVu_Sans',sans-serif] font-bold text-white">
      <div className="flex w-[262px] shrink-0 flex-col">
        <div className={CARD + " mt-[3px] ml-[1px] h-[134.500px] w-[256px] rounded-[17px]"}>
          <Fit w={105} className="mt-[9px] ml-[74px] text-[9px]">Controllers Settings</Fit>
          <div className="mt-[4px] ml-[6px] h-[1.500px] w-[244px] shrink-0 bg-white/80" />
          <Fit w={53} className="mt-[9.500px] mb-[2.500px] ml-[11px] text-[6.500px]">Balancing PID:</Fit>
          {PID.map(([k, v, at, cls], i) => (
            <div key={i} className={"flex shrink-0 items-center text-[4px] " + cls}>
              <Fit w={7} className="ml-[12px] font-normal">{k}</Fit>
              <span className="ml-[6px] flex w-[23px]"><Fit w={v.length * 2.450} className={i === 5 ? "" : "font-normal"}>{v}</Fit></span>
              <Slider w={193.500} h="s" at={at} />
            </div>
          ))}
        </div>
        <div className={CARD + " mt-[18px] ml-[2px] h-[126px] w-[255.500px] rounded-[17px]"}>
          <Fit w={79} className="mt-[8px] ml-[87px] text-[9px]">Speed Settings</Fit>
          <div className="mt-[5.500px] mb-[6px] ml-[6px] h-[1.500px] w-[244px] shrink-0 bg-white/80" />
          {SPEED.map(([k, kw, v, vw, at, a, b], i) => (
            <div key={k} className="flex h-[17.600px] shrink-0 items-center">
              <div className="flex w-[89px] shrink-0 items-center"><Fit w={kw} className={(i === 3 ? "text-[4.200px] " : "text-[5.500px] ") + a}>{k}</Fit><Fit w={vw} className={"text-[6.300px] " + b}>{v}</Fit></div>
              <Slider w={i === 4 ? 162 : 159} h="m" at={at} />
            </div>
          ))}
        </div>
      </div>
      <div className="flex flex-col">
        <svg viewBox="21 42 738 486" className="mt-[11px] ml-[-1px] h-[162px] w-[246px] shrink-0" fontFamily="DejaVu Sans" fontWeight="bold">
          <rect x="83" y="58" width="661" height="427" fill="#fff" />
          <path d="M83 58h661v60H83zM83 190h661v72H83zM83 334h661v73H83z" fill="#e3e3e3" />
          {Array.from({ length: 29 }, (_, i) => <path key={i} d={`M83 ${60 + i * 14.500}H744`} stroke="#d9d9d9" strokeWidth="1.200" strokeDasharray="7 5" />)}
          {Array.from({ length: 11 }, (_, i) => <path key={i} d={`M${107 + i * 60.500} 58V485`} stroke={i % 5 === 4 ? "#aaa" : "#d6d6d6"} strokeWidth="1.500" strokeDasharray="7 5" />)}
          <path d="M83 118H744M83 190H744M83 262H744M83 334H744M83 407H744M83 478H744" stroke="#b9b9b9" strokeWidth="1.500" strokeDasharray="9 5" />
          <path d="M530 332L548 330 553 262 560 250 565 300 570 278 580 302 590 295 598 325 605 400 613 465 617 375 622 410 626 385 630 400 632 315 636 335 640 328" fill="none" stroke="#d6d6d0" strokeWidth="1.800" />
          <path d={"M83 192" + noise(86, 530) + "L533 186 536 198 539 184 542 200 545 180 548 202 550 155 553 175 556 248 558 185 561 215 564 244 570 232 575 255 579 238 585 268 590 252 596 272 602 292 607 262 612 250 615 205 620 225 625 195 629 197 631 76 634 236 636 182 639 212 642 185 646 198" + noise(649, 744)} fill="none" stroke="#2626ff" strokeWidth="2.200" />
          <path d="M83 193H370Q408 186 440 189L530 192 552 193Q560 225 575 240L592 262 606 264 618 225 628 197 744 193" fill="none" stroke="#ef4a5a" strokeWidth="1.800" />
          <path d="M83 58V485H744" fill="none" stroke="#111" strokeWidth="2" />
          <path d="M79 60h8v6h-8zM736 482h7v7h-7z" fill="#111" />
          <g fontSize="11" fill="#1b1b1b" fontWeight="normal" textAnchor="end"><text x="79" y="122">30</text><text x="79" y="194">20</text><text x="79" y="338">0</text><text x="79" y="411">-10</text><text x="79" y="482">-20</text><text x="367" y="499">29:40s</text><text x="669" y="499">29:50s</text></g>
          <text x="27" y="274" fontSize="18" fill="#fff" textLength="55" lengthAdjust="spacingAndGlyphs">Angle</text>
          <text x="385" y="516" fontSize="18" fill="#fff" textLength="47" lengthAdjust="spacingAndGlyphs">Time</text>
        </svg>
        <div className="mt-[6px] flex h-[34px] shrink-0 items-center">
          <div className={CARD + " ml-[9.500px] h-[33px] w-[118px] rounded-[5px]"}>
            <Fit w={47} className="mt-[4.500px] ml-[38px] text-[5px]">Baterry Level [%]</Fit>
            <div className="mt-[1.500px] ml-[3px] h-px w-[110px] bg-white/80" />
            <div className="mt-[3px] ml-[2px] h-[7.500px] w-[112px] border border-[#aaa] bg-[#e2e2e2]" />
            <div className="ml-[2px] flex w-[112px] justify-between text-[3px] leading-[5px]">{[0, 10, 20, 30, 40, 50, 60, 70, 80, 90, 100].map((n) => <span key={n}>{n}</span>)}</div>
          </div>
          <span className="ml-[2px] h-[14px] w-[14px] shrink-0 rounded-full border-[2px] border-[#ececec] bg-[#8f8f8f]" />
          <Fit w={61.500} className="ml-[6px] text-[5.500px]">Joystick Connected</Fit>
        </div>
        <div className="mt-[5px] ml-[15px] flex h-[19px] shrink-0 items-center"><Slider w={212} h="l" at={103} /></div>
        <div className="mt-[2px] flex shrink-0">
          <div className={CARD + " ml-[9px] h-[39px] w-[141.500px] rounded-[5px]"}>
            <Fit w={89} className="mt-[5px] ml-[25px] text-[5.800px]">Save/Restore Data Balancing</Fit>
            <div className="mt-[2.500px] ml-[4px] h-px w-[131px] bg-white/80" />
            <div className="flex">
              {([["Save Data", 19, "w-[33.500px]"], ["Save As Defaults", 32, "w-[56px] border-l border-dashed border-white/70"], ["Restore Default Data", 40, "w-[50px] border-l border-dashed border-white/70"]] as [string, number, string][]).map(([t, w, c]) => (
                <div key={t} className={"flex h-[22px] flex-col items-center pt-[2px] text-[3.300px] " + c}>
                  <Fit w={w}>{t}</Fit>
                  <span className="mt-[2px] flex h-[13px] w-[13px] shrink-0 items-center justify-center rounded-full bg-[radial-gradient(#fff,#cfcfcf)] text-[#777]"><MdPowerSettingsNew className="h-[6px] w-[6px]" /></span>
                </div>
              ))}
            </div>
          </div>
          <div className="ml-[14px] flex w-[68px] flex-col">
            <Fit w={66} className="mt-[3.500px] text-[6.300px]">PWM Value: 0.0 %</Fit>
            <button className="mt-[8px] ml-[5px] flex h-[21px] w-[61.500px] items-center justify-center rounded-[2px] border border-white bg-[linear-gradient(#0084ff,#00e5ff)] text-[#0a2238]"><Fit w={35} className="text-[6.800px]">PWM Test</Fit></button>
          </div>
        </div>
      </div>
    </section>
  );
}

/* ---------------------------------------------------------------- signal chart */

const burst = (x: number) => `L${x - 3} 480L${x} 255 ${x + 2} 362 ${x + 4} 320 ${x + 7} 75 ${x + 9} 200`;
const SIGNAL =
  "M94 542L630 542 650 540 700 542 722 540 731 535 745 541 780 540 830 541 842 539 860 541 1120 542 1198 541 1205 537 1213 538 1214 515 1216 512 1218 487 1221 505 1225 511 1231 503 1237 508 1243 500" +
  burst(1249) + "L1259 520 1262 503 1267 510 1272 502 1279 510 1284 500" + burst(1288) + "L1297 536 1304 537 1306 520 1309 488 1312 505 1316 511 1321 503 1327 508 1334 500" + burst(1339) + "L1348 220";

function SignalChart() {
  return (
    <svg viewBox="0 24 1440 570" className="ml-[10px] h-[190px] w-[480px] shrink-0">
      <rect x="32" y="28" width="1380" height="540" fill="#fff" stroke="#e8e8e8" strokeWidth="3" />
      <path d="M28 101h4M28 212h4M28 322h4M28 433h4M28 543h4" stroke="#ddd" strokeWidth="2" />
      <path d="M24 294h3v8h-3zM31 24h8v3h-8z" fill="#c5c5c5" />
      <path d={SIGNAL} fill="none" stroke="#9cc3dc" strokeWidth="2.500" opacity=".75" transform="translate(0 -3)" />
      <path d={SIGNAL} fill="none" stroke="#f0c39c" strokeWidth="2" opacity=".8" />
      <path d="M1256 53v20M1295 53v20M1347 53v20" stroke="#cfe4f3" strokeWidth="4" />
      <path d="M1256 72v28M1295 72v28M1347 72v28" stroke="#f0b98b" strokeWidth="4" />
      <path d="M1256 98v110M1295 98v110M1347 98v110M1248 285v50M1287 285v50M1339 285v50" stroke="#9fb0bb" strokeWidth="2.500" opacity=".7" />
      <path d="M1250 347v16M1289 347v16M1341 347v16" stroke="#93705a" strokeWidth="3" opacity=".7" />
      <path d="M93 570H1352" stroke="#808080" strokeWidth="5" /><path d="M719 573h5v3h-5z" fill="#888" />
    </svg>
  );
}

export default function App() {
  return (
    <div className="flex h-[1080px] w-[1920px] overflow-hidden bg-white">
      <div className="flex w-[1003px] shrink-0 flex-col border-t border-l border-[#a8a5a5]">
        <FilesApp />
        <div className="mt-[18px] flex h-[252px] shrink-0"><WebMail /><MailServer /></div>
        <div className="mt-[18px] flex h-[286px] shrink-0"><RobotPanel /><SignalChart /></div>
        <div className="h-px w-[1002px] shrink-0 bg-[#a8a5a5]" />
      </div>
      <h1 className="mt-[422px] ml-auto flex flex-col items-end pr-[105px] font-['Inter',sans-serif] text-[94px] leading-[108px] font-light text-[#63776c]">
        <Tracked w={442}>Integration</Tracked>
        <Tracked w={483}>One-stop IT</Tracked>
        <Tracked w={345} className="font-bold">Solution</Tracked>
      </h1>
    </div>
  );
}
